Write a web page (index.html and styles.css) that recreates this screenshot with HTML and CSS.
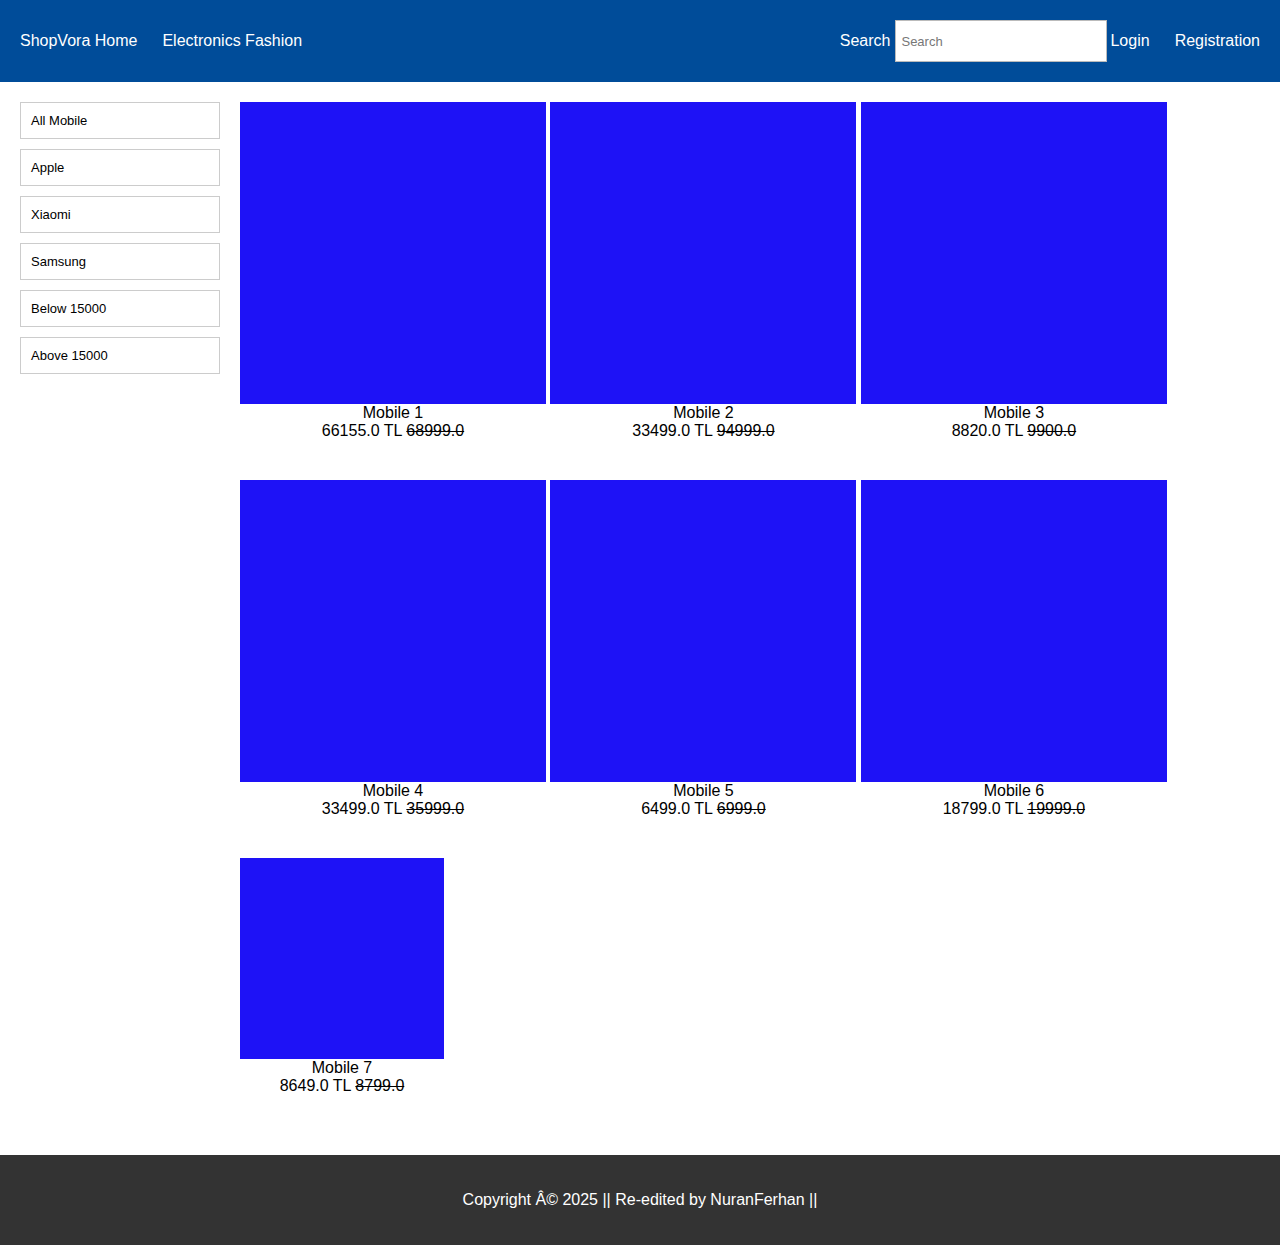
FILE: index.html
```html
<!DOCTYPE html>
<html>
<head>
<meta charset="utf-8">
<title>ShopVora</title>
<link rel="stylesheet" href="styles.css">
</head>
<body>
<header class="topbar">
  <nav class="nav-left">
    <a href="#" class="nav-link">ShopVora Home</a>
    <a href="#" class="nav-link">Electronics Fashion</a>
  </nav>
  <div class="nav-right">
    <span class="search-label">Search</span>
    <input class="search-input" type="text" placeholder="Search">
    <a href="#" class="nav-link login">Login</a>
    <a href="#" class="nav-link">Registration</a>
  </div>
</header>
<main class="main">
  <aside class="sidebar">
    <button class="filter">All Mobile</button>
    <button class="filter">Apple</button>
    <button class="filter">Xiaomi</button>
    <button class="filter">Samsung</button>
    <button class="filter">Below 15000</button>
    <button class="filter">Above 15000</button>
  </aside>
  <section class="products">
    <div class="card"><div class="pic"></div><div class="name">Mobile 1</div><div class="price">66155.0 TL <s>68999.0</s></div></div>
    <div class="card"><div class="pic"></div><div class="name">Mobile 2</div><div class="price">33499.0 TL <s>94999.0</s></div></div>
    <div class="card"><div class="pic"></div><div class="name">Mobile 3</div><div class="price">8820.0 TL <s>9900.0</s></div></div>
    <div class="card"><div class="pic"></div><div class="name">Mobile 4</div><div class="price">33499.0 TL <s>35999.0</s></div></div>
    <div class="card"><div class="pic"></div><div class="name">Mobile 5</div><div class="price">6499.0 TL <s>6999.0</s></div></div>
    <div class="card"><div class="pic"></div><div class="name">Mobile 6</div><div class="price">18799.0 TL <s>19999.0</s></div></div>
    <div class="card small"><div class="pic"></div><div class="name">Mobile 7</div><div class="price">8649.0 TL <s>8799.0</s></div></div>
  </section>
</main>
<footer class="footer">Copyright Â© 2025 || Re-edited by NuranFerhan ||</footer>
</body>
</html>
```
FILE: styles.css
```css
html, body {
  margin: 0;
  padding: 0;
}
body {
  font-family: "Liberation Sans", Arial, sans-serif;
  font-size: 16px;
  color: #000;
  background: #fff;
}
.topbar {
  background: #004c99;
  height: 82px;
  padding: 0 20px;
  box-sizing: border-box;
  display: flex;
  align-items: center;
  justify-content: space-between;
}
.nav-left, .nav-right {
  display: flex;
  align-items: center;
}
.nav-left {
  gap: 25px;
}
.nav-link {
  color: #fff;
  text-decoration: none;
  font-size: 16px;
  line-height: 18px;
}
.search-label {
  color: #fff;
  line-height: 18px;
  margin-right: 5px;
}
.search-input {
  width: 212px;
  height: 42px;
  box-sizing: border-box;
  border: 1px solid #bbb;
  padding: 0 5px;
  font-family: "Liberation Sans", Arial, sans-serif;
  font-size: 13px;
  margin: 0 3px 0 0;
  outline: none;
}
.search-input::placeholder {
  color: #777;
}
.login {
  margin-right: 25px;
}
.main {
  display: flex;
  align-items: flex-start;
  padding: 20px;
}
.sidebar {
  width: 200px;
  flex: none;
  margin-right: 20px;
  display: flex;
  flex-direction: column;
  gap: 10px;
}
.filter {
  display: block;
  width: 200px;
  height: 37px;
  box-sizing: border-box;
  border: 1px solid #ccc;
  background: #fff;
  text-align: left;
  padding: 0 10px;
  font-family: "Liberation Sans", Arial, sans-serif;
  font-size: 13px;
  color: #000;
}
.products {
  width: 1020px;
  flex: none;
}
.card {
  display: inline-block;
  vertical-align: top;
  width: 30%;
  text-align: center;
  margin-bottom: 40px;
  line-height: 18px;
}
.card .pic {
  display: block;
  width: 100%;
  height: 302px;
  background: #1e12f6;
}
.card.small {
  width: 20%;
}
.card.small .pic {
  height: 201px;
}
.footer {
  background: #333;
  color: #fff;
  text-align: center;
  height: 90px;
  box-sizing: border-box;
  padding-top: 36px;
  line-height: 18px;
}
```
